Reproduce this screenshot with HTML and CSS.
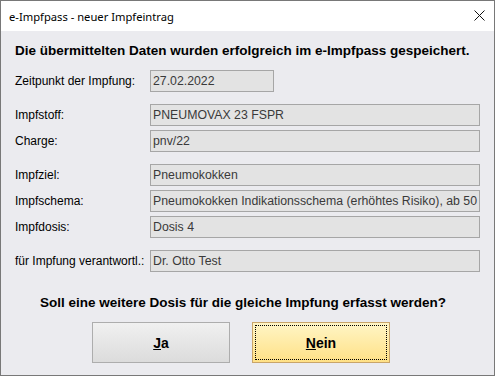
FILE: index.html
```html
<!DOCTYPE html>
<html lang="de">
<head>
    <meta charset="UTF-8">
    <title>e-Impfpass - neuer Impfeintrag</title>
    <link rel="stylesheet" href="styles.css">
</head>
<body>

    <div class="window">

        <!-- Titelleiste -->
        <div class="titlebar">
            <span class="title">e-Impfpass - neuer Impfeintrag</span>
            <svg class="close" width="11" height="11" viewBox="0 0 11 11">
                <path d="M0.5 0.5 L10.5 10.5 M10.5 0.5 L0.5 10.5" stroke="#111" stroke-width="1" fill="none"/>
            </svg>
        </div>

        <div class="content">
            <p class="headline">Die übermittelten Daten wurden erfolgreich im e-Impfpass gespeichert.</p>

            <div class="form">
                <label>Zeitpunkt der Impfung:</label>
                <div class="field short">27.02.2022</div>

                <label class="group">Impfstoff:</label>
                <div class="field group">PNEUMOVAX 23 FSPR</div>
                <label>Charge:</label>
                <div class="field">pnv/22</div>

                <label class="group">Impfziel:</label>
                <div class="field group">Pneumokokken</div>
                <label>Impfschema:</label>
                <div class="field">Pneumokokken Indikationsschema (erhöhtes Risiko), ab 50</div>
                <label>Impfdosis:</label>
                <div class="field">Dosis 4</div>

                <label class="group">für Impfung verantwortl.:</label>
                <div class="field group">Dr. Otto Test</div>
            </div>

            <p class="question">Soll eine weitere Dosis für die gleiche Impfung erfasst werden?</p>

            <div class="buttons">
                <button class="btn"><u>J</u>a</button>
                <button class="btn default"><span class="focus"><u>N</u>ein</span></button>
            </div>
        </div>

    </div>

</body>
</html>
```

FILE: styles.css
```css
body {
    margin: 0;
    font-family: "Liberation Sans", Arial, sans-serif;
    font-size: 12px;
    color: #000;
    background: #ebebef;
}

.window {
    width: 495px;
    height: 376px;
    box-sizing: border-box;
    border: 1px solid #787878;
    background: #ebebef; /* Dialog-Hintergrund */
}

.titlebar {
    height: 30px;
    background: #fff;
    display: flex;
    align-items: center;
    justify-content: space-between;
    padding: 0 9px 0 8px;
}
.title { font-family: "Noto Sans", sans-serif; font-size: 11.2px; }
.close { margin-top: -1px; }

.content {
    padding: 12px 23px 0 14px;
}

.headline {
    margin: 0 0 11px 0;
    font-weight: bold;
    font-size: 13.5px;
    line-height: 16px;
}

/* Formular: Label links, Feld rechts */
.form {
    display: grid;
    grid-template-columns: 135px 330px;
    row-gap: 4px;
    align-items: center;
}
.form .group { margin-top: 8px; }

.field {
    height: 22px;
    box-sizing: border-box;
    background: #e3e3e3;
    border: 1px solid #a6a6a6;
    color: #3a3a3a;
    padding: 0 0 0 2px;
    font-size: 12.3px;
    line-height: 20px;
    white-space: nowrap;
    overflow: hidden;
}
.field.short { width: 124px; }

.question {
    margin: 23px 0 0 0;
    text-align: center;
    font-weight: bold;
    font-size: 13.5px;
    line-height: 16px;
}

.buttons {
    display: flex;
    gap: 22px;
    margin: 11px 0 0 77px;
}

.btn {
    width: 138px;
    height: 41px;
    font-family: "Liberation Sans", Arial, sans-serif;
    font-weight: bold;
    font-size: 14px;
    color: #000;
    border: 1px solid #adadad;
    background: linear-gradient(#f0f0f0, #dcdcdc);
    padding: 0;
}
.btn.default {
    border-color: #c9a56a;
    background: linear-gradient(#fff5c6, #ffe186);
    padding: 2px;
}
.focus {
    display: flex;
    align-items: center;
    justify-content: center;
    height: 100%;
    box-sizing: border-box;
    border: 1px dotted #000;
}
```
